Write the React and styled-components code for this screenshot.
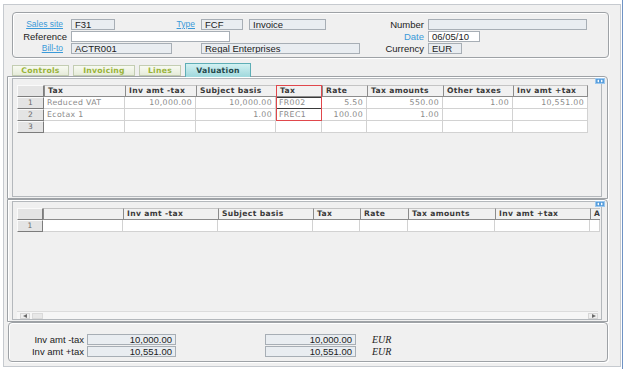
import React from 'react';
import styled, { createGlobalStyle } from 'styled-components';

const Global = createGlobalStyle`
  html, body { margin: 0; padding: 0; background: #fff; }
  body { width: 627px; height: 369px; overflow: hidden; font-family: "Liberation Sans", Arial, sans-serif; }
  * { box-sizing: border-box; }
`;

const Screen = styled.div`
  display: flex;
  align-items: flex-start;
  padding: 4px 0 0 3px;
  height: 369px;
`;

const Window = styled.div`
  width: 618px;
  height: 363px;
  border: 1px solid #c6cacf;
  background: #f0f0f0;
  display: flex;
  flex-direction: column;
`;

const EdgeLine = styled.div`
  width: 1px;
  margin-left: 1px;
  margin-top: -4px;
  height: 369px;
  background: #6f93c4;
`;

const GroupBox = styled.div`
  position: relative;
  border: 1px solid #9ea2a6;
  border-radius: ${p => p.$radius || '4px'};
  box-shadow: inset 1px 1px 0 #fff, 1px 1px 0 #fff;
  margin-left: ${p => p.$ml}px;
  margin-top: ${p => p.$mt || 0}px;
  width: ${p => p.$w}px;
  height: ${p => p.$h}px;
`;

const HeaderInner = styled.div`
  display: flex;
  padding-top: 6px;
`;

const Form = styled.div`
  display: flex;
  flex-direction: column;
  gap: 1px;
  width: ${p => p.$w}px;
`;

const FormRow = styled.div`
  display: flex;
  align-items: center;
  height: 11px;
`;

const Label = styled.span`
  width: ${p => p.$w || 54}px;
  padding-right: ${p => p.$pr || 0}px;
  margin-right: ${p => p.$mr ?? 4}px;
  text-align: right;
  font-size: ${p => (p.$link ? '8.5px' : '9.5px')};
  color: ${p => (p.$link || p.$blue ? '#3a9ad9' : '#222')};
  text-decoration: ${p => (p.$link ? 'underline' : 'none')};
  white-space: nowrap;
  line-height: 11px;
`;

const Field = styled.div`
  width: ${p => p.$w}px;
  height: 11px;
  margin-left: ${p => p.$ml || 0}px;
  border: 1px solid #a7aeb5;
  background: ${p => (p.$white ? '#fff' : '#e9edf1')};
  font-size: 9.5px;
  line-height: 9px;
  padding: 0 3px;
  color: #1b1b1b;
  text-align: ${p => (p.$right ? 'right' : 'left')};
  white-space: nowrap;
  overflow: hidden;
`;

const TabStrip = styled.div`
  display: flex;
  align-items: flex-end;
  gap: 4px;
  height: 13px;
  margin-top: 5px;
  margin-left: 8px;
  position: relative;
  z-index: 2;
`;

const Tab = styled.div`
  width: ${p => p.$w}px;
  height: ${p => (p.$active ? 14 : 11)}px;
  margin-bottom: ${p => (p.$active ? -1 : 0)}px;
  border: 1px solid ${p => (p.$active ? '#5eaeb6' : '#c3cdb2')};
  border-bottom: ${p => (p.$active ? 'none' : '1px solid #c3cdb2')};
  background: ${p => (p.$active ? 'linear-gradient(#d2f1f2, #9fd8dc)' : 'linear-gradient(#f8faf2, #e6ecda)')};
  display: flex;
  align-items: center;
  justify-content: center;
  font-family: "DejaVu Sans", Verdana, sans-serif;
  font-weight: bold;
  font-size: 7.7px;
  color: ${p => (p.$active ? '#24484c' : '#9ab43a')};
  letter-spacing: 0.25px;
`;

const Viewport = styled.div`
  margin: 1px 5px 1px 4px;
  height: ${p => p.$h}px;
  border: 1px solid #b4b8bc;
  padding: 6px 0 0 4px;
  overflow: hidden;
  display: flex;
  flex-direction: column;
`;

const GridWrap = styled.div`
  position: relative;
  display: flex;
  flex-direction: column;
`;

const GridRow = styled.div`
  display: grid;
  grid-template-columns: ${p => p.$cols};
  height: 12px;
  width: max-content;
`;

const HeadCell = styled.div`
  background: #f1f1f1;
  border-top: 1px solid #c4c4c4;
  border-left: 1px solid #8c8c8c;
  border-bottom: 1px solid #8c8c8c;
  border-right: ${p => (p.$last ? '1px solid #8c8c8c' : 'none')};
  font-family: "DejaVu Sans", Verdana, sans-serif;
  font-weight: bold;
  font-size: 7.6px;
  letter-spacing: 0.35px;
  color: #3a3a3a;
  line-height: 10px;
  padding-left: 3px;
  white-space: nowrap;
  overflow: hidden;
`;

const NumCell = styled.div`
  background: #e4e4e4;
  border-top: 1px solid #fafafa;
  border-left: 1px solid #fafafa;
  border-right: 1px solid #7c7c7c;
  border-bottom: 1px solid #7c7c7c;
  font-family: "DejaVu Sans", Verdana, sans-serif;
  font-size: 7.5px;
  color: #6a6a6a;
  text-align: center;
  line-height: 10px;
`;

const Cell = styled.div`
  background: #fff;
  border-right: 1px solid #d2d2d2;
  border-bottom: 1px solid #d2d2d2;
  outline: ${p => (p.$focus ? '1px solid #3a3a3a' : 'none')};
  outline-offset: -1px;
  font-family: "DejaVu Sans", Verdana, sans-serif;
  font-size: 7.8px;
  letter-spacing: 0.35px;
  color: #8a8a8a;
  text-align: ${p => (p.$num ? 'right' : 'left')};
  padding: 0 3px;
  line-height: 11px;
  white-space: nowrap;
  overflow: hidden;
`;

const Highlight = styled.div`
  position: absolute;
  left: ${p => p.$x}px;
  top: 0;
  width: ${p => p.$w}px;
  height: 36px;
  border: 1px solid #e0474c;
  pointer-events: none;
`;

const Spacer = styled.div`
  flex: 1;
`;

const HScroll = styled.div`
  display: flex;
  align-items: center;
  height: 8px;
  margin: 0 3px 0 0;
  border-top: 1px solid #dcdcdc;
  background: #f6f6f6;
`;

const ScrollBtn = styled.div`
  width: 10px;
  height: 6px;
  margin-left: ${p => p.$ml || 0}px;
  display: flex;
  align-items: center;
  justify-content: center;
  border: 1px solid #d6d6d6;
  background: #efefef;
`;

const Thumb = styled.div`
  width: 11px;
  height: 6px;
  margin-left: 2px;
  border: 1px solid #dadada;
  background: #e8e8e8;
`;

const Corner = styled.svg`
  position: absolute;
  top: 1px;
  right: 2px;
`;

const FooterInner = styled.div`
  display: flex;
  flex-direction: column;
  gap: 1px;
  padding-top: 11px;
`;

const FootLabel = styled.span`
  width: 75px;
  margin-right: 3px;
  text-align: right;
  font-size: 9.5px;
  color: #222;
  line-height: 11px;
`;

const Currency = styled.span`
  margin-left: 16px;
  font-family: "Liberation Serif", "Times New Roman", serif;
  font-style: italic;
  font-size: 10px;
  color: #222;
  line-height: 11px;
`;

const CornerIcon = () => (
  <Corner width="10" height="6" viewBox="0 0 10 6">
    <rect x="0" y="0" width="10" height="6" fill="#5a9fdc" />
    <rect x="0.5" y="0.5" width="9" height="5" fill="none" stroke="#9cc8ef" strokeWidth="1" />
    <path d="M2 3 L4 1.5 L4 4.5 Z" fill="#fff" />
    <path d="M8 3 L6 1.5 L6 4.5 Z" fill="#fff" />
  </Corner>
);

const Arrow = ({ dir }) => (
  <svg width="5" height="4" viewBox="0 0 5 4">
    {dir === 'left' ? <path d="M0 2 L4 0 L4 4 Z" fill="#6b6b6b" /> : <path d="M5 2 L1 0 L1 4 Z" fill="#6b6b6b" />}
  </svg>
);

const cols1 = [27, 81, 71, 80, 46, 45, 76, 70, 75];
const head1 = ['', 'Tax', 'Inv amt -tax', 'Subject basis', 'Tax', 'Rate', 'Tax amounts', 'Other taxes', 'Inv amt +tax'];
const rows1 = [
  ['Reduced VAT', '10,000.00', '10,000.00', 'FR002', '5.50', '550.00', '1.00', '10,551.00'],
  ['Ecotax 1', '', '1.00', 'FREC1', '100.00', '1.00', '', ''],
  ['', '', '', '', '', '', '', ''],
];
const numeric1 = [false, true, true, false, true, true, true, true];

const cols2 = [26, 80, 95, 95, 47, 48, 87, 95, 10];
const head2 = ['', '', 'Inv amt -tax', 'Subject basis', 'Tax', 'Rate', 'Tax amounts', 'Inv amt +tax', 'A'];

const tpl = c => c.map(w => `${w}px`).join(' ');

export default function App() {
  return (
    <>
      <Global />
      <Screen>
        <Window>
          <GroupBox $ml={8} $mt={7} $w={597} $h={46}>
            <HeaderInner>
              <Form $w={357}>
                <FormRow>
                  <Label $link $pr={4}>Sales site</Label>
                  <Field $w={44}>F31</Field>
                  <Label $link $w={86} $pr={6} $mr={0}>Type</Label>
                  <Field $w={42}>FCF</Field>
                  <Field $w={77} $ml={6}>Invoice</Field>
                </FormRow>
                <FormRow>
                  <Label>Reference</Label>
                  <Field $w={159} $white />
                </FormRow>
                <FormRow>
                  <Label $link $pr={4}>Bill-to</Label>
                  <Field $w={101}>ACTR001</Field>
                  <Field $w={159} $ml={29}>Regal Enterprises</Field>
                </FormRow>
              </Form>
              <Form $w={230}>
                <FormRow>
                  <Label>Number</Label>
                  <Field $w={159} />
                </FormRow>
                <FormRow>
                  <Label $blue>Date</Label>
                  <Field $w={52} $white>06/05/10</Field>
                </FormRow>
                <FormRow>
                  <Label>Currency</Label>
                  <Field $w={34}>EUR</Field>
                </FormRow>
              </Form>
            </HeaderInner>
          </GroupBox>

          <TabStrip>
            <Tab $w={57}>Controls</Tab>
            <Tab $w={62}>Invoicing</Tab>
            <Tab $w={42}>Lines</Tab>
            <Tab $w={66} $active>Valuation</Tab>
          </TabStrip>

          <GroupBox $ml={3} $w={601} $h={123} $radius="0 4px 0 0">
            <CornerIcon />
            <Viewport $h={119}>
              <GridWrap>
                <GridRow $cols={tpl(cols1)}>
                  {head1.map((h, i) =>
                    i === 0 ? <NumCell key={i} /> : <HeadCell key={i} $last={i === head1.length - 1}>{h}</HeadCell>
                  )}
                </GridRow>
                {rows1.map((r, ri) => (
                  <GridRow key={ri} $cols={tpl(cols1)}>
                    <NumCell>{ri + 1}</NumCell>
                    {r.map((v, ci) => (
                      <Cell key={ci} $num={numeric1[ci]} $focus={ri === 0 && ci === 3}>{v}</Cell>
                    ))}
                  </GridRow>
                ))}
                <Highlight $x={259} $w={46} />
              </GridWrap>
            </Viewport>
          </GroupBox>

          <GroupBox $ml={3} $w={601} $h={123} $radius="0 4px 0 0">
            <CornerIcon />
            <Viewport $h={119}>
              <GridWrap>
                <GridRow $cols={tpl(cols2)}>
                  {head2.map((h, i) =>
                    i === 0 ? <NumCell key={i} /> : <HeadCell key={i}>{h}</HeadCell>
                  )}
                </GridRow>
                <GridRow $cols={tpl(cols2)}>
                  <NumCell>1</NumCell>
                  {cols2.slice(1).map((_, ci) => <Cell key={ci} />)}
                </GridRow>
              </GridWrap>
              <Spacer />
              <HScroll>
                <ScrollBtn $ml={3}><Arrow dir="left" /></ScrollBtn>
                <Thumb />
                <Spacer />
                <ScrollBtn><Arrow dir="right" /></ScrollBtn>
              </HScroll>
            </Viewport>
          </GroupBox>

          <GroupBox $ml={4} $w={600} $h={40}>
            <FooterInner>
              <FormRow>
                <FootLabel>Inv amt -tax</FootLabel>
                <Field $w={89} $right>10,000.00</Field>
                <Field $w={91} $ml={89} $right>10,000.00</Field>
                <Currency>EUR</Currency>
              </FormRow>
              <FormRow>
                <FootLabel>Inv amt +tax</FootLabel>
                <Field $w={89} $right>10,551.00</Field>
                <Field $w={91} $ml={89} $right>10,551.00</Field>
                <Currency>EUR</Currency>
              </FormRow>
            </FooterInner>
          </GroupBox>
        </Window>
        <EdgeLine />
      </Screen>
    </>
  );
}
